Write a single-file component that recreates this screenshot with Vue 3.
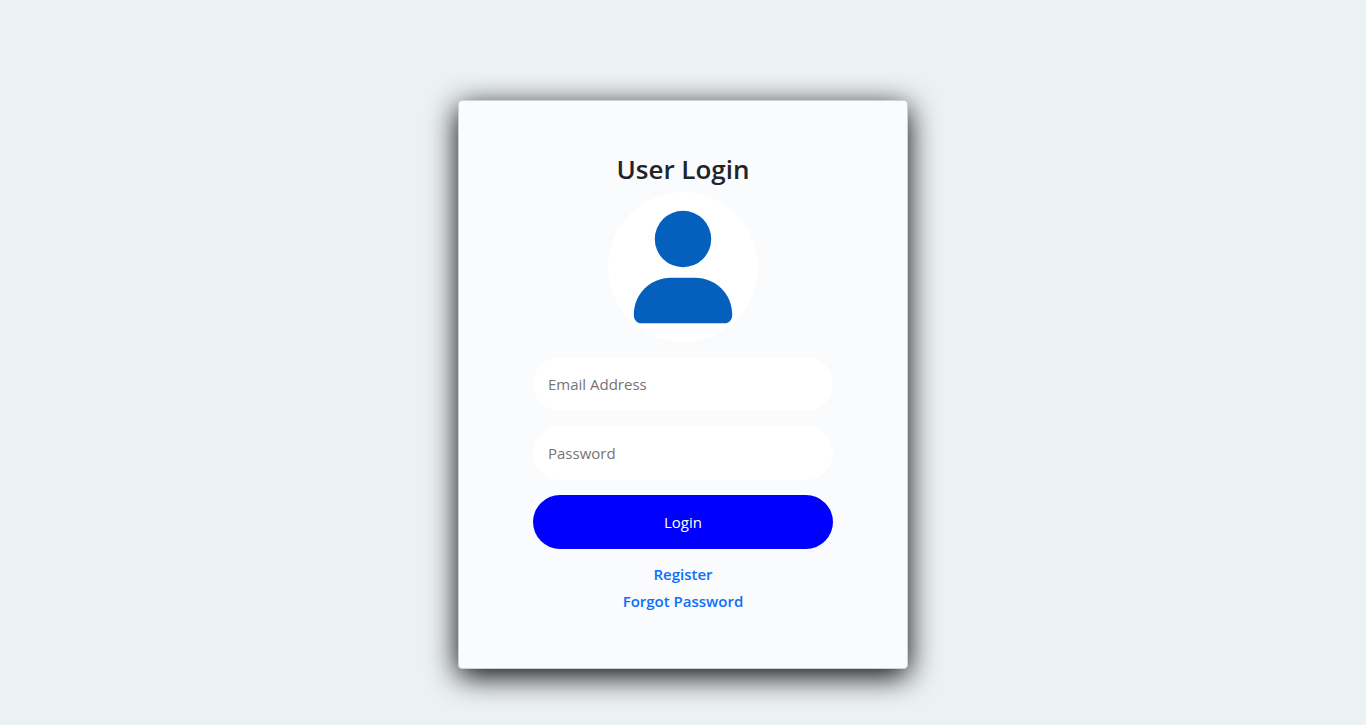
<script setup>
import { ref } from 'vue'

const email = ref('')
const password = ref('')
</script>

<template>
  <main class="page">
    <form class="card" @submit.prevent>
      <h1 class="title">User Login</h1>
      <svg class="avatar" viewBox="0 0 150 150" aria-hidden="true">
        <circle cx="75" cy="75" r="75" fill="#fff" />
        <circle cx="75" cy="47" r="28.2" fill="#0560bd" />
        <path d="M63 85.700H87C108 85.700 124.200 102 124.200 123C124.200 128 121 131.300 116.500 131.300H33.500C29 131.300 25.800 128 25.800 123C25.800 102 42 85.700 63 85.700Z" fill="#0560bd" />
      </svg>
      <input v-model="email" class="field" type="email" placeholder="Email Address" aria-label="Email Address" />
      <input v-model="password" class="field" type="password" placeholder="Password" aria-label="Password" />
      <button class="submit" type="submit">Login</button>
      <nav class="links">
        <a href="#register">Register</a>
        <a href="#forgot">Forgot Password</a>
      </nav>
    </form>
  </main>
</template>

<style>
body {
  margin: 0;
  background: #ecf1f4;
}
</style>

<style scoped>
.page {
  display: flex;
  justify-content: center;
  padding: 100px 16px 56px;
  font-family: "Segoe UI", "Open Sans", "Noto Sans", sans-serif;
  font-size: 15px;
  line-height: 24px;
  color: #212529;
}
.card {
  box-sizing: border-box;
  width: 100%;
  max-width: 450px;
  display: flex;
  flex-direction: column;
  align-items: center;
  padding: 50px 74px 55px;
  background: #fafbfd;
  border: 1px solid #d0d3d6;
  border-radius: 4px;
  box-shadow: 0 7px 30px #000;
}
.title {
  margin: 0 0 5px;
  font-size: 26px;
  font-weight: 600;
  line-height: 36px;
}
.avatar {
  width: 150px;
  height: 150px;
  margin-bottom: 15px;
}
.field,
.submit {
  box-sizing: border-box;
  width: 100%;
  height: 54px;
  margin: 0 0 15px;
  padding: 15px;
  border: 0;
  border-radius: 27px;
  font: inherit;
}
.field {
  background: #fff;
  color: #212529;
}
.field::placeholder {
  color: #757575;
}
.submit {
  margin-bottom: 13px;
  background: #00f;
  color: #fff;
  cursor: pointer;
}
.links {
  display: flex;
  flex-direction: column;
  align-items: center;
  gap: 3px;
}
.links a {
  color: #0d6efd;
  font-weight: 600;
  text-decoration: none;
}
</style>
